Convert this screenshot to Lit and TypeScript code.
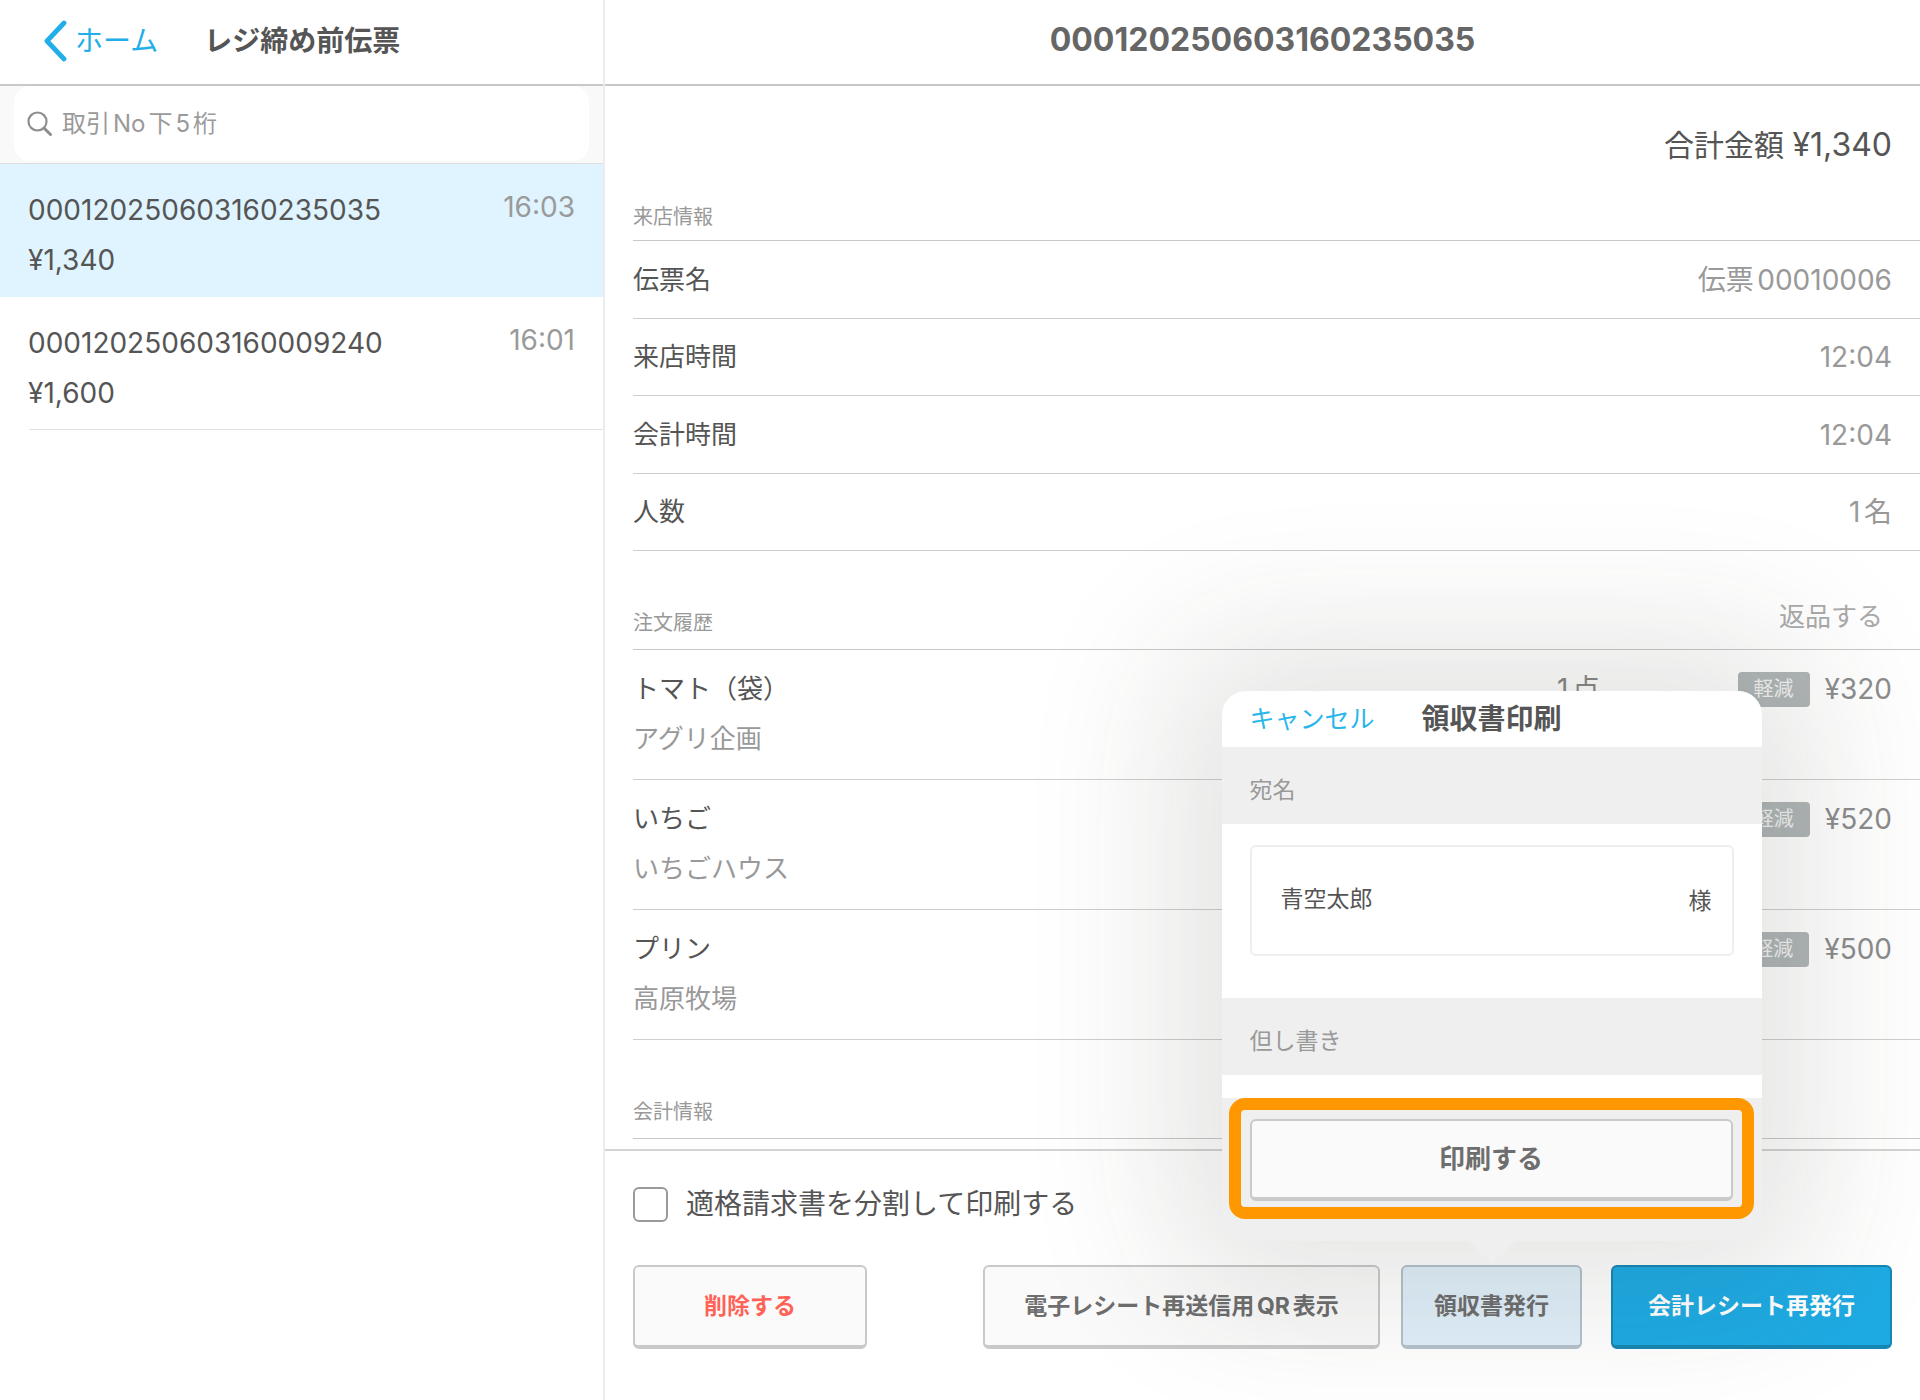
import { LitElement, html, css, svg } from "lit";
import { customElement, property, state } from "lit/decorators.js";
import { classMap } from "lit/directives/class-map.js";

interface Slip {
  no: string;
  total: string;
  time: string;
}

interface OrderItem {
  name: string;
  maker: string;
  count: string;
  price: string;
}

const SLIPS: Slip[] = [
  { no: "000120250603160235035", total: "¥1,340", time: "16:03" },
  { no: "000120250603160009240", total: "¥1,600", time: "16:01" },
];

const VISIT: [string, string][] = [
  ["伝票名", "伝票00010006"],
  ["来店時間", "12:04"],
  ["会計時間", "12:04"],
  ["人数", "1名"],
];

const ITEMS: OrderItem[] = [
  { name: "トマト（袋）", maker: "アグリ企画", count: "1点", price: "¥320" },
  { name: "いちご", maker: "いちごハウス", count: "1点", price: "¥520" },
  { name: "プリン", maker: "高原牧場", count: "1点", price: "¥500" },
];

const reset = css`
  *,
  *::before,
  *::after {
    box-sizing: border-box;
  }
  h1,
  h2,
  h3,
  p,
  ul,
  dl,
  dd {
    margin: 0;
    padding: 0;
    font-weight: 400;
  }
  ul {
    list-style: none;
  }
  button,
  input {
    margin: 0;
    font-family: inherit;
    color: inherit;
  }
  button {
    padding: 0;
    border: 0;
    background: none;
    cursor: pointer;
  }
  a {
    color: inherit;
    text-decoration: none;
  }
`;

const actionStyles = css`
  .action {
    height: 84px;
    border: 2px solid #c8caca;
    border-bottom-width: 4px;
    border-radius: 6px;
    background: #fafafa;
    color: #6e6e6e;
    font-size: 23px;
    font-weight: 700;
    line-height: 32px;
    white-space: nowrap;
  }
`;

@customElement("slip-list")
export class SlipList extends LitElement {
  @property({ attribute: false }) slips: Slip[] = [];
  @state() private selected = 0;

  static styles = [
    reset,
    css`
      :host {
        display: flex;
        flex-direction: column;
        border-right: 2px solid #ececec;
      }
      .bar {
        display: flex;
        align-items: center;
        gap: 46px;
        height: 86px;
        padding: 0 43px 3px;
        border-bottom: 2px solid #c8c8c8;
      }
      .back {
        display: flex;
        align-items: center;
        gap: 8px;
        color: #22aee8;
        font-size: 28px;
        line-height: 40px;
      }
      .title {
        color: #555;
        font-size: 28px;
        font-weight: 700;
        line-height: 40px;
        white-space: nowrap;
      }
      .search {
        padding: 0 14px 2px;
        border-bottom: 1px solid #dedede;
        background: #f9f9f9;
      }
      .field {
        display: flex;
        align-items: center;
        gap: 8px;
        height: 75px;
        padding: 0 12px;
        border-radius: 16px;
        background: #fff;
        color: #8e8e8e;
      }
      .field input {
        flex: 1;
        min-width: 0;
        padding: 0;
        border: 0;
        outline: 0;
        background: none;
        font-size: 24px;
        line-height: 32px;
      }
      .field input::placeholder {
        color: #9a9a9a;
        opacity: 1;
      }
      .slip {
        display: flex;
        justify-content: space-between;
        width: 100%;
        height: 133px;
        padding: 21px 28px 0;
        color: #555;
        font-size: 28px;
        line-height: 50px;
        text-align: left;
      }
      .slip.on {
        background: #e0f4ff;
      }
      .lines {
        display: flex;
        flex-direction: column;
      }
      .time {
        color: #9a9a9a;
        line-height: 44px;
      }
      li:last-child {
        background: linear-gradient(#e2e2e2, #e2e2e2) 29px 100% / 100% 1px no-repeat;
      }
    `,
  ];

  render() {
    return html`
      <header class="bar">
        <a class="back" href="#home">
          <svg width="24" height="44" viewBox="0 0 24 44" aria-hidden="true">
            <path d="M21 4 L4 22 L21 40" fill="none" stroke="currentColor" stroke-width="4.8" stroke-linecap="round" stroke-linejoin="round" />
          </svg>
          <span>ホーム</span>
        </a>
        <h2 class="title">レジ締め前伝票</h2>
      </header>
      <div class="search">
        <label class="field">
          <svg width="28" height="28" viewBox="0 0 28 28" aria-hidden="true">
            <circle cx="11.5" cy="11.5" r="9" fill="none" stroke="currentColor" stroke-width="2.2" />
            <path d="M18 18 L24.5 24.5" fill="none" stroke="currentColor" stroke-width="3" stroke-linecap="round" />
          </svg>
          <input type="text" placeholder="取引No下5桁" aria-label="取引No下5桁" />
        </label>
      </div>
      <ul>
        ${this.slips.map(
          (s, i) => html`<li>
            <button class=${classMap({ slip: true, on: i === this.selected })} @click=${() => (this.selected = i)}>
              <span class="lines"><span>${s.no}</span><span>${s.total}</span></span>
              <span class="time">${s.time}</span>
            </button>
          </li>`
        )}
      </ul>
    `;
  }
}

@customElement("receipt-popover")
export class ReceiptPopover extends LitElement {
  static styles = [
    reset,
    actionStyles,
    css`
      :host {
        display: block;
      }
      .panel {
        position: relative;
        border-radius: 24px;
        background: #efefef;
        box-shadow: 0 0 150px 50px rgba(50, 50, 40, 0.13);
      }
      .head {
        display: grid;
        grid-template-columns: 1fr auto 1fr;
        align-items: center;
        height: 56px;
        padding: 0 28px;
        border-radius: 24px 24px 0 0;
        background: #fff;
      }
      .cancel {
        justify-self: start;
        color: #29b6ea;
        font-size: 25px;
        line-height: 36px;
      }
      .title {
        color: #555;
        font-size: 28px;
        font-weight: 700;
        line-height: 40px;
      }
      .caption {
        display: block;
        height: 77px;
        padding: 27px 28px 0;
        color: #999;
        font-size: 23px;
        line-height: 32px;
      }
      .body {
        padding: 21px 28px 42px;
        background: #fff;
      }
      .box {
        display: flex;
        align-items: center;
        gap: 16px;
        height: 111px;
        padding: 0 20px 0 29px;
        border: 2px solid #eee;
        border-radius: 6px;
        color: #555;
        font-size: 23px;
        line-height: 32px;
      }
      .box input {
        flex: 1;
        min-width: 0;
        padding: 0 0 4px;
        border: 0;
        outline: 0;
        background: none;
        font-size: 23px;
        line-height: 32px;
      }
      .gap {
        height: 23px;
        background: #fff;
      }
      .foot {
        padding: 0 8px 22px 7px;
      }
      .focus {
        display: flex;
        padding: 9px 9px 6px;
        border: 12px solid #ff9800;
        border-radius: 16px;
        background: #efefef;
      }
      .focus .action {
        flex: 1;
        height: 82px;
        font-size: 26px;
      }
      .arrow {
        position: absolute;
        top: 100%;
        left: 50%;
        transform: translateX(-50%);
        display: block;
      }
    `,
  ];

  render() {
    return html`
      <section class="panel" role="dialog" aria-labelledby="popover-title">
        <header class="head">
          <button class="cancel">キャンセル</button>
          <h2 class="title" id="popover-title">領収書印刷</h2>
        </header>
        <label class="caption" for="addressee">宛名</label>
        <div class="body">
          <div class="box">
            <input id="addressee" type="text" .value=${"青空太郎"} />
            <span>様</span>
          </div>
        </div>
        <h3 class="caption">但し書き</h3>
        <div class="gap"></div>
        <div class="foot">
          <div class="focus"><button class="action">印刷する</button></div>
        </div>
        <svg class="arrow" width="56" height="24" viewBox="0 0 56 24" aria-hidden="true">
          ${svg`<path d="M0 0 Q5 0 9 4 L26 22 Q28 24 30 22 L47 4 Q51 0 56 0 Z" fill="#efefef" />`}
        </svg>
      </section>
    `;
  }
}

@customElement("app-root")
export class AppRoot extends LitElement {
  static styles = [
    reset,
    actionStyles,
    css`
      :host {
        display: grid;
        grid-template-columns: 605px minmax(0, 1fr);
        min-height: 100vh;
        overflow: hidden;
        background: #fff;
        color: #555;
        font-family: Inter, "Noto Sans CJK JP", sans-serif;
        font-size: 26px;
        text-autospace: normal;
      }
      slip-list {
        position: relative;
        z-index: 2;
      }
      .detail {
        display: flex;
        flex-direction: column;
        min-width: 0;
      }
      .bar {
        height: 86px;
        padding-top: 20px;
        border-bottom: 2px solid #c8c8c8;
        color: #666;
        text-align: center;
      }
      .bar h1 {
        font-size: 32px;
        font-weight: 700;
        line-height: 40px;
      }
      .content {
        flex: 1;
        padding: 35px 0 10px 28px;
      }
      .total {
        padding-right: 28px;
        font-size: 30px;
        line-height: 48px;
        text-align: right;
      }
      .amount {
        font-size: 32px;
      }
      .section {
        display: flex;
        align-items: center;
        justify-content: space-between;
        height: 72px;
        padding-top: 24px;
        border-bottom: 1px solid #c8c8c8;
        color: #999;
        font-size: 20px;
        line-height: 28px;
      }
      .section h3 {
        font-size: 20px;
      }
      .section.wide {
        height: 99px;
        padding-top: 46px;
      }
      .return {
        padding: 0 37px 12px 0;
        color: #aaa;
        font-size: 26px;
        line-height: 36px;
      }
      .row {
        display: flex;
        align-items: center;
        justify-content: space-between;
        height: 78px;
        padding-right: 28px;
        border-bottom: 1px solid #cecece;
        line-height: 40px;
      }
      .row:nth-child(even) {
        height: 77px;
      }
      .row dd {
        color: #999;
        font-size: 28px;
      }
      .items {
        width: 100%;
        border-collapse: separate;
        border-spacing: 0;
      }
      .items td {
        height: 130px;
        padding: 14px 0 0;
        border-bottom: 1px solid #cecece;
        line-height: 50px;
        text-align: left;
        vertical-align: top;
      }
      .maker {
        color: #999;
      }
      .items .count {
        width: 180px;
        color: #888;
        font-size: 28px;
      }
      .items .price {
        width: 183px;
        padding-right: 28px;
        color: #8c8c8c;
        font-size: 28px;
      }
      .sum {
        display: flex;
        align-items: center;
        justify-content: flex-end;
        gap: 15px;
      }
      .badge {
        padding: 0 16px;
        border-radius: 4px;
        background: #b0b7b7;
        color: #f2f2f2;
        font-size: 20px;
        line-height: 35px;
      }
      .footer {
        padding: 36px 28px 51px;
        border-top: 2px solid #d4d4d4;
      }
      .split {
        display: flex;
        align-items: center;
        gap: 18px;
        width: fit-content;
        height: 35px;
        font-size: 28px;
        line-height: 35px;
      }
      .split input {
        appearance: none;
        width: 35px;
        height: 35px;
        border: 2px solid #999;
        border-radius: 6px;
        background: #fff;
      }
      .actions {
        display: flex;
        margin-top: 43px;
      }
      .delete {
        width: 234px;
        margin-right: auto;
        color: #ff6257;
      }
      .qr {
        width: 397px;
        margin-right: 21px;
      }
      .anchor {
        position: relative;
        margin-right: 29px;
      }
      .receipt {
        width: 181px;
        border-color: #b4c2cb;
        background: #e0effa;
      }
      .reissue {
        width: 281px;
        border-color: #1787b3;
        background: #1eabe3;
        color: #fff;
      }
      receipt-popover {
        position: absolute;
        z-index: 1;
        bottom: calc(100% + 24px);
        left: 50%;
        width: 540px;
        transform: translateX(-50%);
      }
    `,
  ];

  render() {
    return html`
      <slip-list .slips=${SLIPS}></slip-list>
      <main class="detail">
        <header class="bar"><h1>${SLIPS[0].no}</h1></header>
        <div class="content">
          <p class="total">合計金額 <span class="amount">¥1,340</span></p>
          <header class="section"><h3>来店情報</h3></header>
          <dl>
            ${VISIT.map(([k, v]) => html`<div class="row"><dt>${k}</dt><dd>${v}</dd></div>`)}
          </dl>
          <header class="section wide">
            <h3>注文履歴</h3>
            <button class="return">返品する</button>
          </header>
          <table class="items" aria-label="注文履歴">
            <tbody>
              ${ITEMS.map(
                (it) => html`<tr>
                  <td>
                    <div>${it.name}</div>
                    <div class="maker">${it.maker}</div>
                  </td>
                  <td class="count">${it.count}</td>
                  <td class="price">
                    <div class="sum"><span class="badge">軽減</span><span>${it.price}</span></div>
                  </td>
                </tr>`
              )}
            </tbody>
          </table>
          <header class="section wide"><h3>会計情報</h3></header>
        </div>
        <footer class="footer">
          <label class="split"><input type="checkbox" />適格請求書を分割して印刷する</label>
          <div class="actions">
            <button class="action delete">削除する</button>
            <button class="action qr">電子レシート再送信用QR表示</button>
            <div class="anchor">
              <button class="action receipt">領収書発行</button>
              <receipt-popover></receipt-popover>
            </div>
            <button class="action reissue">会計レシート再発行</button>
          </div>
        </footer>
      </main>
    `;
  }
}
